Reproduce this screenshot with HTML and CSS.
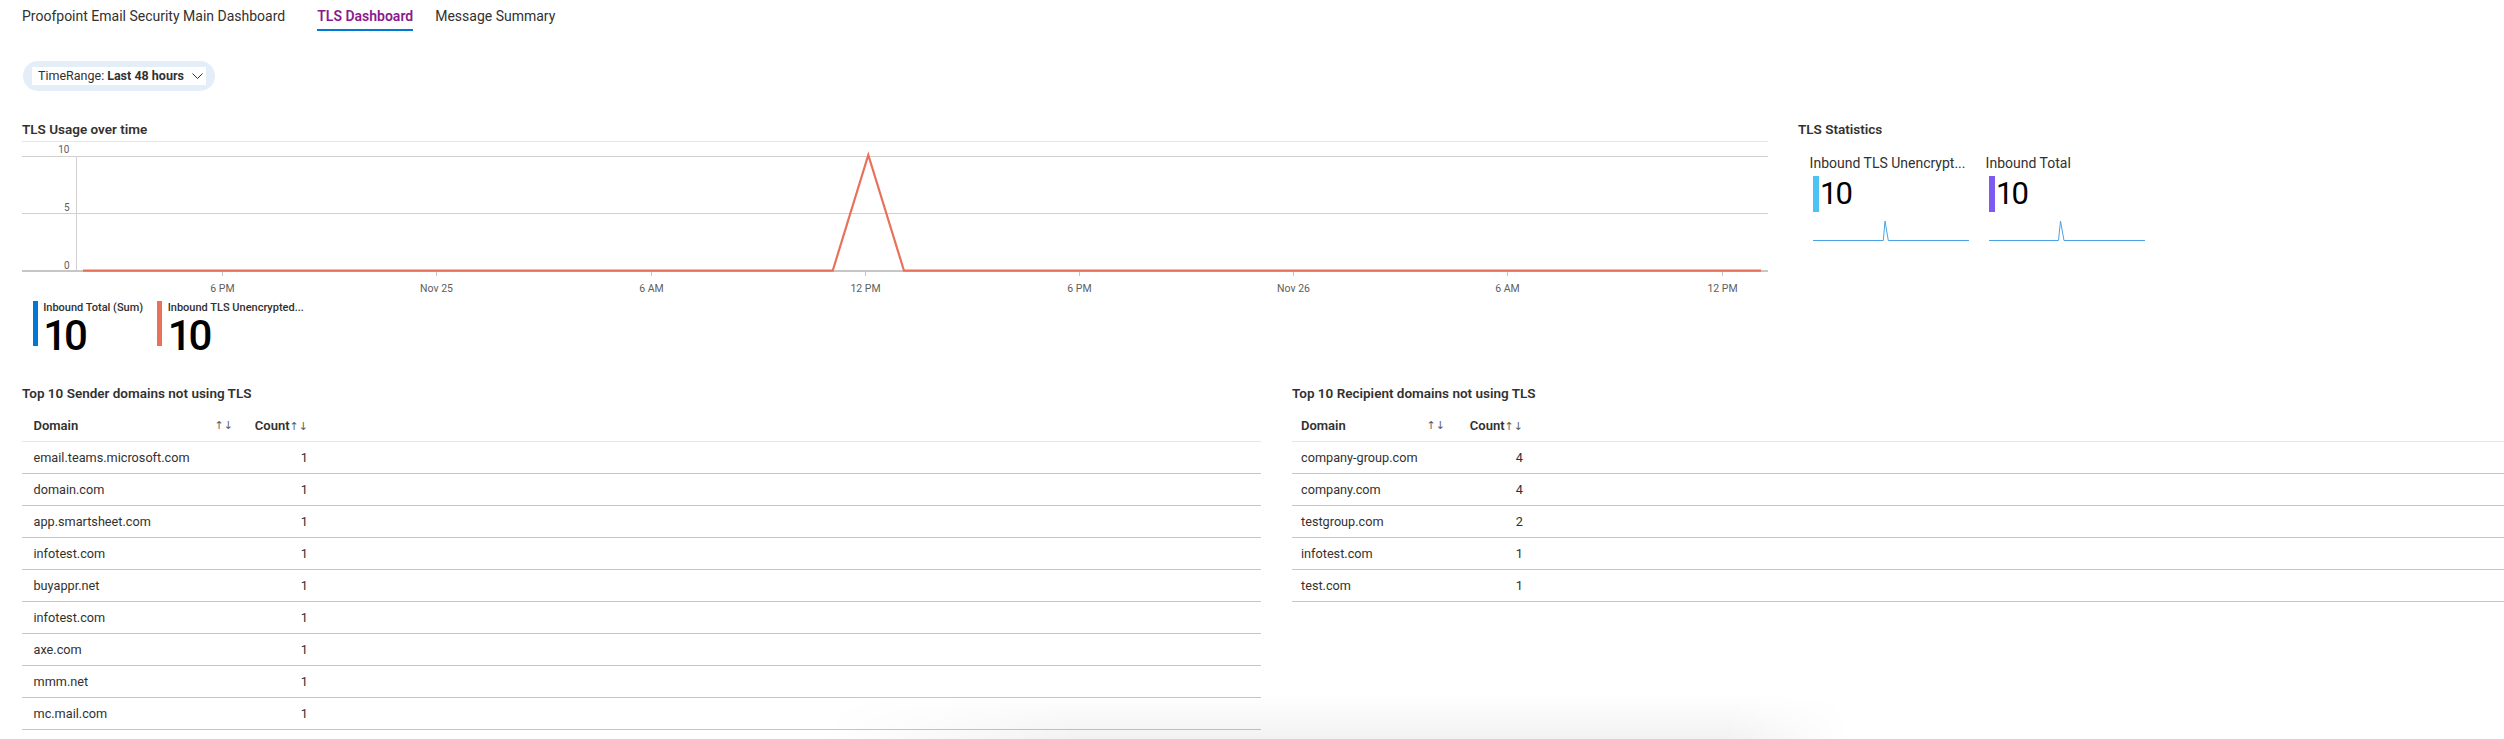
FILE: index.html
```html
<!DOCTYPE html>
<html lang="en">
<head>
<meta charset="utf-8">
<title>TLS Dashboard</title>
<link rel="stylesheet" href="styles.css">
</head>
<body>
<div class="page">
  <nav class="tabs">
    <a class="tab">Proofpoint Email Security Main Dashboard</a>
    <a class="tab tab-active">TLS Dashboard</a>
    <a class="tab">Message Summary</a>
  </nav>

  <div class="params">
    <div class="pill">
      <div class="pill-inner">
        <span>TimeRange:</span><b>Last 48 hours</b>
        <svg class="chev" width="11" height="6" viewBox="0 0 11 6"><path d="M0.5 0.5 L5.5 5.5 L10.5 0.5" fill="none" stroke="#323130" stroke-width="1"/></svg>
      </div>
    </div>
  </div>

  <section class="top">
    <div class="chart-panel">
      <h2 class="title">TLS Usage over time</h2>
      <svg class="chart" width="1746" height="159" viewBox="0 0 1746 159">
        <line x1="0" y1="2.5" x2="1746" y2="2.5" stroke="#e6e6e6"/>
        <line x1="0" y1="17.5" x2="1746" y2="17.5" stroke="#d2d0ce"/>
        <line x1="0" y1="74.5" x2="1746" y2="74.5" stroke="#d2d0ce"/>
        <line x1="54.5" y1="17.5" x2="54.5" y2="132" stroke="#d2d0ce"/>
        <line x1="0" y1="132" x2="1746" y2="132" stroke="#c8c6c4" stroke-width="2"/>
        <g stroke="#c8c6c4" stroke-width="1">
          <line x1="200.5" y1="133" x2="200.5" y2="137"/>
          <line x1="414.5" y1="133" x2="414.5" y2="137"/>
          <line x1="629.5" y1="133" x2="629.5" y2="137"/>
          <line x1="843.5" y1="133" x2="843.5" y2="137"/>
          <line x1="1057.5" y1="133" x2="1057.5" y2="137"/>
          <line x1="1271.5" y1="133" x2="1271.5" y2="137"/>
          <line x1="1485.5" y1="133" x2="1485.5" y2="137"/>
          <line x1="1700.5" y1="133" x2="1700.5" y2="137"/>
        </g>
        <g class="ylab" text-anchor="end">
          <text x="47.5" y="14">10</text>
          <text x="47.5" y="72">5</text>
          <text x="47.5" y="129.5">0</text>
        </g>
        <g class="xlab" text-anchor="middle">
          <text x="200.5" y="152.5">6 PM</text>
          <text x="414.5" y="152.5">Nov 25</text>
          <text x="629.5" y="152.5">6 AM</text>
          <text x="843.5" y="152.5">12 PM</text>
          <text x="1057.5" y="152.5">6 PM</text>
          <text x="1271.5" y="152.5">Nov 26</text>
          <text x="1485.5" y="152.5">6 AM</text>
          <text x="1700.5" y="152.5">12 PM</text>
        </g>
        <polyline points="61,131.7 810.7,131.7 846.3,16 882,131.7 1739,131.7" fill="none" stroke="#e8715a" stroke-width="2.2"/>
      </svg>
      <div class="legend">
        <div class="ltile">
          <div class="lbar lbar-blue"></div>
          <div class="ltext">
            <div class="llabel">Inbound Total (Sum)</div>
            <div class="lnum">10</div>
          </div>
        </div>
        <div class="ltile">
          <div class="lbar lbar-orange"></div>
          <div class="ltext">
            <div class="llabel">Inbound TLS Unencrypted...</div>
            <div class="lnum">10</div>
          </div>
        </div>
      </div>
    </div>

    <div class="stats-panel">
      <h2 class="title">TLS Statistics</h2>
      <div class="stiles">
        <div class="stile">
          <div class="slabel">Inbound TLS Unencrypt...</div>
          <div class="svalue"><div class="sbar sbar-cyan"></div><div class="snum">10</div></div>
          <svg class="spark" width="156" height="22" viewBox="0 0 156 22"><polyline points="0,21.5 70.3,21.5 72,2 75.3,21.5 156,21.5" fill="none" stroke="#4aa3e6" stroke-width="1"/></svg>
        </div>
        <div class="stile">
          <div class="slabel">Inbound Total</div>
          <div class="svalue"><div class="sbar sbar-purple"></div><div class="snum">10</div></div>
          <svg class="spark" width="156" height="22" viewBox="0 0 156 22"><polyline points="0,21.5 69.5,21.5 71.5,2 75,21.5 156,21.5" fill="none" stroke="#4aa3e6" stroke-width="1"/></svg>
        </div>
      </div>
    </div>
  </section>

  <section class="tables">
    <div class="tpanel tpanel-left">
      <h2 class="title">Top 10 Sender domains not using TLS</h2>
      <div class="grid">
        <div class="trow thead">
          <div class="c1"><span>Domain</span><span class="sort">↑↓</span></div>
          <div class="c2">Count<span class="sort">↑↓</span></div>
        </div>
        <div class="trow"><div class="c1">email.teams.microsoft.com</div><div class="c2">1</div></div>
        <div class="trow"><div class="c1">domain.com</div><div class="c2">1</div></div>
        <div class="trow"><div class="c1">app.smartsheet.com</div><div class="c2">1</div></div>
        <div class="trow"><div class="c1">infotest.com</div><div class="c2">1</div></div>
        <div class="trow"><div class="c1">buyappr.net</div><div class="c2">1</div></div>
        <div class="trow"><div class="c1">infotest.com</div><div class="c2">1</div></div>
        <div class="trow"><div class="c1">axe.com</div><div class="c2">1</div></div>
        <div class="trow"><div class="c1">mmm.net</div><div class="c2">1</div></div>
        <div class="trow"><div class="c1">mc.mail.com</div><div class="c2">1</div></div>
      </div>
    </div>
    <div class="tpanel tpanel-right">
      <h2 class="title">Top 10 Recipient domains not using TLS</h2>
      <div class="grid">
        <div class="trow thead">
          <div class="c1"><span>Domain</span><span class="sort">↑↓</span></div>
          <div class="c2">Count<span class="sort">↑↓</span></div>
        </div>
        <div class="trow"><div class="c1">company-group.com</div><div class="c2">4</div></div>
        <div class="trow"><div class="c1">company.com</div><div class="c2">4</div></div>
        <div class="trow"><div class="c1">testgroup.com</div><div class="c2">2</div></div>
        <div class="trow"><div class="c1">infotest.com</div><div class="c2">1</div></div>
        <div class="trow"><div class="c1">test.com</div><div class="c2">1</div></div>
      </div>
    </div>
  </section>
</div>
<div class="bottom-shade"></div>
</body>
</html>
```

FILE: styles.css
```css
* { box-sizing: border-box; }
html, body { margin: 0; padding: 0; background: #ffffff; }
body {
  font-family: Roboto, "Noto Sans", "DejaVu Sans", sans-serif;
  color: #323130;
  width: 2504px;
  height: 739px;
  overflow: hidden;
}
.page { padding-left: 22px; }

/* tabs */
.tabs { display: flex; align-items: flex-start; }
.tab {
  font-size: 14px;
  line-height: 20px;
  padding: 6px 0 3px;
  border-bottom: 2px solid transparent;
  color: #323130;
  text-decoration: none;
  white-space: nowrap;
}
.tab-active {
  color: #8a1a8c;
  font-weight: 600;
  border-bottom-color: #0078d4;
  margin: 0 22px 0 32px;
}

/* parameter pill */
.params { display: flex; padding-top: 30px; }
.pill {
  height: 30px;
  padding: 6px 9px;
  margin-left: 1px;
  background: #e3eef9;
  border-radius: 15px;
}
.pill-inner {
  height: 18px;
  display: flex;
  align-items: center;
  padding: 0 3px 0 6px;
  background: #ffffff;
  font-size: 12.5px;
  line-height: 18px;
  white-space: nowrap;
}
.pill-inner b { font-weight: 700; margin-left: 3px; }
.chev { margin-left: 8px; display: block; }

/* top section */
.top { display: flex; padding-top: 28px; }
.chart-panel { width: 1746px; flex: none; }
.title {
  margin: 0;
  font-size: 13.5px;
  line-height: 20px;
  font-weight: 600;
  color: #323130;
  white-space: nowrap;
}
.chart { display: block; }
.ylab { font-size: 10px; fill: #605e5c; }
.xlab { font-size: 10.5px; fill: #605e5c; }

.legend { display: flex; margin-top: 3px; padding-left: 10.5px; }
.ltile { display: flex; width: 124.5px; flex: none; }
.lbar { width: 5px; height: 45px; flex: none; }
.lbar-blue { background: #0078d4; }
.lbar-orange { background: #e8715a; }
.ltext { margin-left: 5.7px; }
.llabel { font-size: 11px; line-height: 13px; font-weight: 500; white-space: nowrap; }
.lnum {
  margin-top: 2px;
  font-size: 42px;
  line-height: 40px;
  font-weight: 500;
  letter-spacing: -3px;
  color: #000000;
}

/* stats */
.stats-panel { margin-left: 30px; }
.stiles { display: flex; margin-top: 14px; padding-left: 11.6px; }
.stile { width: 176px; flex: none; }
.slabel { font-size: 14px; line-height: 20px; white-space: nowrap; }
.svalue { display: flex; margin-top: 3px; margin-left: 3.4px; }
.sbar { width: 6px; height: 36px; flex: none; }
.sbar-cyan { background: #4cc2f5; }
.sbar-purple { background: #7f5af0; }
.snum {
  margin-left: 1px;
  font-size: 31px;
  line-height: 36px;
  letter-spacing: -2px;
  color: #000000;
}
.spark { display: block; margin-top: 7px; margin-left: 3.4px; }

/* tables */
.tables { display: flex; margin-top: 27px; }
.tpanel-left { width: 1239px; flex: none; }
.tpanel-right { flex: 1; margin-left: 31px; }
.grid { margin-top: 7px; font-size: 12.7px; color: #323130; }
.trow {
  display: flex;
  align-items: center;
  height: 32px;
  border-bottom: 1px solid #c8c6c4;
  white-space: nowrap;
}
.trow.thead { border-bottom-color: #e6e6e6; font-weight: 600; font-size: 13px; }
.c1 {
  display: flex;
  justify-content: space-between;
  align-items: center;
  flex: none;
}
.c2 { flex: none; text-align: right; }
.tpanel-left .c1 { width: 221px; padding: 0 10px 0 11.5px; }
.tpanel-left .c2 { width: 75px; padding-right: 10px; }
.tpanel-right .c1 { width: 163px; padding: 0 10px 0 9px; }
.tpanel-right .c2 { width: 76px; padding-right: 8px; }
.sort {
  font-family: "DejaVu Sans", sans-serif;
  font-size: 11px;
  font-weight: 400;
  color: #605e5c;
}

/* faint shade at the bottom edge */
.bottom-shade {
  position: fixed;
  left: 820px;
  bottom: 0;
  width: 1030px;
  height: 45px;
  background: linear-gradient(to bottom, rgba(0,0,0,0), rgba(0,0,0,0.05));
  -webkit-mask-image: linear-gradient(to right, transparent, #000 25%, #000 88%, transparent);
  mask-image: linear-gradient(to right, transparent, #000 25%, #000 88%, transparent);
  pointer-events: none;
}
```
